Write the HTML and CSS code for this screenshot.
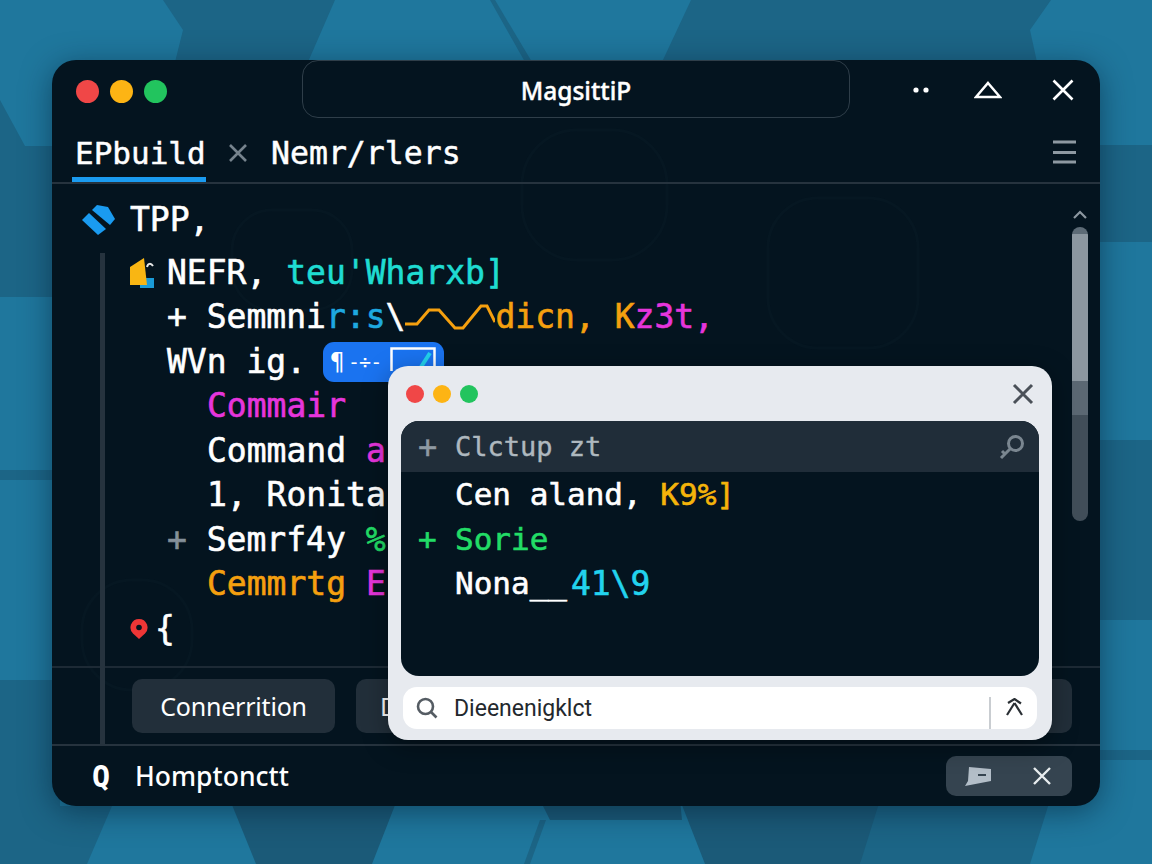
FILE: index.html
```html
<!DOCTYPE html>
<html lang="en">
<head>
<meta charset="utf-8">
<title>MagsittiP</title>
<link rel="stylesheet" href="styles.css">
</head>
<body>
<svg class="backdrop" viewBox="0 0 1152 864" aria-hidden="true">
  <rect class="bg-base" width="1152" height="864"/>
  <polygon class="bg-dark" points="163,0 335,0 308,62 175,62 183,30"/>
  <polygon class="bg-dark" points="691,0 1051,0 1030,30 1037,62 662,62"/>
  <polygon class="bg-dark" points="490,0 495,0 532,62 525,62"/>
  <polygon class="bg-dark" points="0,100 25,146 52,146 52,297 0,297"/>
  <polygon class="bg-dark" points="0,470 52,470 52,480 0,480"/>
  <polygon class="bg-dark" points="0,680 60,680 60,806 112,806 87,864 0,864"/>
  <polygon class="bg-deep" points="230,800 397,800 372,864 256,864"/>
  <polygon class="bg-deep" points="540,800 680,800 682,820 550,820"/>
  <polygon class="bg-deep" points="680,800 880,800 882,820 860,864 705,864"/>
  <polygon class="bg-dark" points="880,800 1050,800 1030,864 860,864"/>
  <polygon class="bg-dark" points="540,820 546,820 530,864 524,864"/>
  <polygon class="bg-dark" points="1090,145 1152,145 1152,242 1090,242"/>
  <polygon class="bg-dark" points="1090,440 1152,440 1152,620 1090,620"/>
  <polygon class="bg-dark" points="1090,750 1152,750 1152,760 1090,760"/>
</svg>
<main class="window">
  <svg class="faces" viewBox="0 0 1048 746" aria-hidden="true">
    <rect x="470" y="70" width="145" height="130" rx="55"/>
    <rect x="716" y="138" width="150" height="150" rx="50"/>
    <rect x="735" y="410" width="130" height="120" rx="50"/>
    <rect x="30" y="520" width="110" height="110" rx="50"/>
    <rect x="180" y="150" width="120" height="100" rx="40"/>
  </svg>
  <header class="titlebar">
    <div class="lights">
      <span class="light red"></span><span class="light amber"></span><span class="light green"></span>
    </div>
    <div class="title-pill">MagsittiP</div>
    <div class="win-actions">
      <svg class="i-dots" viewBox="0 0 16 6"><circle cx="3" cy="3" r="2.6"/><circle cx="13" cy="3" r="2.6"/></svg>
      <svg class="i-tri" viewBox="0 0 28 18"><path d="M14 2 L26 16 H2 Z"/></svg>
      <svg class="i-close" viewBox="0 0 22 22"><path d="M1.5 1.5 L20.5 20.5 M20.5 1.5 L1.5 20.5"/></svg>
    </div>
  </header>
  <nav class="tabs">
    <div class="tab active">EPbuild</div>
    <svg class="tab-x" viewBox="0 0 20 20"><path d="M2 2 L18 18 M18 2 L2 18"/></svg>
    <div class="tab">Nemr/rlers</div>
    <svg class="hamburger" viewBox="0 0 24 24"><path d="M1 2 H24 M1 12.5 H24 M1 22 H24"/></svg>
  </nav>
  <section class="editor">
    <div class="code">
      <div class="row root">
        <svg class="i-diamond" viewBox="0 0 33 30"><path d="M10 5 L15 0 L26 2 L33 14 L28 20 Z"/><path d="M0 15 L7 8 L24 24 L16 30 Z"/></svg>
        <span class="txt">TPP,</span>
      </div>
      <div class="row lvl0">
        <svg class="i-folder" viewBox="0 0 25 30"><path class="f-arc" d="M17 9 C18 5 21 5 23 8"/><rect class="f-blue" x="10" y="20" width="14" height="10"/><path class="f-gold" d="M0 9 L14 0 L17 27 L0 27 Z"/></svg>
        <span class="txt">NEFR, <span class="c-cyan">teu'Wharxb]</span></span>
      </div>
      <div class="row lvl1">
        <span class="txt">+ Semmni<span class="c-sky">r:s</span>\</span>
        <svg class="i-wave" viewBox="0 0 90 34"><path d="M0 24 L12 24 L24 10 L34 10 L50 28 L58 28 L76 6 L82 6 L90 22"/></svg>
        <span class="txt c-orange">dicn, K<span class="c-pink">z3t,</span></span>
      </div>
      <div class="row lvl1">
        <span class="txt">WVn ig.</span>
        <span class="badge">
          <span class="badge-mark">¶</span>
          <span class="badge-dash">-÷-</span>
          <svg class="i-box" viewBox="0 0 46 24"><rect x="1.5" y="1.5" width="43" height="30"/><path d="M31 20 L40 6" /></svg>
        </span>
      </div>
      <div class="row lvl2"><span class="txt c-pink">Commair</span></div>
      <div class="row lvl2"><span class="txt">Command <span class="c-pink">a</span></span></div>
      <div class="row lvl2"><span class="txt">1, Ronita</span></div>
      <div class="row lvl1"><span class="txt"><span class="c-grey">+</span> Semrf4y <span class="c-green">%</span></span></div>
      <div class="row lvl2"><span class="txt c-orange">Cemmrtg <span class="c-pink">E</span></span></div>
      <div class="row lvl0">
        <svg class="i-pin" viewBox="0 0 18 20"><path class="pin-body" d="M9 0 A8.5 8.5 0 0 1 15 14.5 L9 20 L3 14.5 A8.5 8.5 0 0 1 9 0 Z"/><circle class="pin-hole" cx="9" cy="8.5" r="2.8"/></svg>
        <span class="txt">{</span>
      </div>
    </div>
    <div class="scroll">
      <svg class="i-chev" viewBox="0 0 16 10"><path d="M2 8 L8 2 L14 8"/></svg>
      <div class="track"></div>
    </div>
  </section>
  <section class="actions">
    <button class="btn btn-first">Connerrition</button>
    <button class="btn btn-second">D</button>
  </section>
  <footer class="status">
    <span class="status-q">Q</span>
    <span class="status-text">Homptonctt</span>
    <div class="status-pill">
      <svg class="i-flag" viewBox="0 0 26 20"><path d="M4 1 L26 3 L26 15 L0 20 L3 15 Z"/><path class="flag-mark" d="M13 9 H21"/></svg>
      <svg class="i-x-small" viewBox="0 0 20 20"><path d="M2 2 L18 18 M18 2 L2 18"/></svg>
    </div>
  </footer>
  <div class="guide"></div>
  <aside class="modal">
    <div class="modal-head">
      <span class="mlight red"></span><span class="mlight amber"></span><span class="mlight green"></span>
      <svg class="i-mclose" viewBox="0 0 22 22"><path d="M2 2 L20 20 M20 2 L2 20"/></svg>
    </div>
    <div class="panel">
      <div class="panel-head">
        <span class="plus">+</span><span>Clctup zt</span>
        <svg class="i-key" viewBox="0 0 26 26"><circle cx="16.5" cy="9.5" r="7"/><path d="M11.5 14.5 L2 24 M6 20 L3 17"/></svg>
      </div>
      <div class="panel-row"><span class="plus"></span>Cen aland,<span class="c-yellow"> K9%]</span></div>
      <div class="panel-row c-green"><span class="plus">+</span>Sorie</div>
      <div class="panel-row"><span class="plus"></span>Nona__<span class="c-cyan2">41\9</span></div>
    </div>
    <div class="searchbar">
      <svg class="i-search" viewBox="0 0 22 22"><circle cx="9.5" cy="9.5" r="7.5"/><path d="M15 15 L20.5 20.5"/></svg>
      <span class="search-text">Dieenenigklct</span>
      <span class="search-div"></span>
      <svg class="i-tool" viewBox="0 0 20 20"><path d="M3 5 L9.5 1 L16 5.5 M9.5 5 L2 17 M9.5 5 L17 17"/></svg>
    </div>
  </aside>
</main>
</body>
</html>
```
FILE: styles.css
```css
* { box-sizing: border-box; }
html, body { margin: 0; height: 864px; overflow: hidden; }
body {
  position: relative;
  padding: 60px 52px 58px;
  font-family: "DejaVu Sans Mono", monospace;
  color: #fff;
}
.backdrop { position: absolute; left: 0; top: 0; width: 1152px; height: 864px; }
.bg-base { fill: #1f779d; }
.bg-dark { fill: #1c6586; }
.bg-deep { fill: #1b5a78; }

.window {
  position: relative;
  width: 1048px;
  height: 746px;
  display: flex;
  flex-direction: column;
  background: #04141f;
  border-radius: 24px;
  overflow: hidden;
  box-shadow: 0 6px 30px rgba(0, 25, 45, .5);
}
.faces { position: absolute; left: 0; top: 0; width: 1048px; height: 746px; }
.faces rect { fill: none; stroke: #061722; stroke-width: 3; }

/* title bar */
.titlebar { position: relative; flex: 0 0 58px; display: flex; align-items: center; }
.lights { display: flex; gap: 11px; margin: 4px 0 0 24px; }
.light { width: 23px; height: 23px; border-radius: 50%; }
.red { background: #f04747; }
.amber { background: #fdb414; }
.green { background: #22c45e; }
.title-pill {
  width: 548px;
  height: 58px;
  margin-left: 135px;
  display: flex;
  align-items: center;
  justify-content: center;
  padding-top: 2px;
  border: 1.5px solid #2f3e49;
  border-radius: 16px;
  font: 500 24.5px "Noto Sans", sans-serif;
  -webkit-text-stroke: .4px currentColor;
}
.win-actions { display: flex; align-items: center; margin: 2px 0 0 63px; }
.i-dots { width: 16px; height: 6px; fill: #fff; margin-right: 45px; }
.i-tri { width: 28px; height: 18px; fill: none; stroke: #fff; stroke-width: 2.5; margin-right: 50px; }
.i-close { width: 22px; height: 22px; stroke: #fff; stroke-width: 2.6; fill: none; }

/* tabs */
.tabs {
  position: relative;
  flex: 0 0 66px;
  display: flex;
  align-items: flex-start;
  border-bottom: 2px solid #26333e;
}
.tab {
  padding: 14px 0 0 3px;
  font-size: 31px;
  line-height: 42px;
  white-space: nowrap;
  -webkit-text-stroke: .5px currentColor;
}
.tab.active {
  width: 134px;
  height: 64px;
  margin-left: 20px;
  border-bottom: 5px solid #1a9bf0;
}
.tab-x { width: 20px; height: 20px; margin: 25px 0 0 22px; fill: none; stroke: #76838d; stroke-width: 2.6; }
.tab-x + .tab { margin-left: 23px; padding-left: 0; font-size: 31.5px; }
.hamburger { width: 24px; height: 24px; margin: 22px 0 0 591px; fill: none; stroke: #8e99a2; stroke-width: 3; }

/* editor */
.editor { position: relative; flex: 1; display: flex; min-height: 0; }
.code { flex: 1; padding-top: 14px; }
.row {
  height: 44.5px;
  display: flex;
  align-items: center;
  font-size: 33px;
  white-space: pre;
  -webkit-text-stroke: .6px currentColor;
}
.row.root { margin-bottom: 8px; padding-left: 30px; }
.row.lvl0 { padding-left: 78px; }
.row.lvl1 { padding-left: 115px; }
.row.lvl2 { padding-left: 155px; }
.txt { line-height: 44px; }
.c-cyan { color: #1fdcd2; }
.c-sky { color: #1ea9e0; }
.c-orange { color: #f5a00f; }
.c-pink { color: #e635dc; }
.c-grey { color: #84909a; }
.c-green { color: #22dc66; }
.c-yellow { color: #f5b40a; }
.c-cyan2 { color: #22d3ee; font-size: 33px; margin-left: 4px; }
.i-diamond { width: 33px; height: 30px; margin-right: 15px; fill: #1a9bf0; }
.i-folder { width: 25px; height: 30px; margin-right: 12px; }
.f-gold { fill: #f9b613; }
.f-blue { fill: #1a9bd8; }
.f-arc { fill: none; stroke: #e8e8e8; stroke-width: 2; }
.i-wave { width: 90px; height: 34px; fill: none; stroke: #f5a00f; stroke-width: 3; }
.badge {
  display: inline-flex;
  align-items: center;
  width: 121px;
  height: 40px;
  margin-left: 17px;
  padding-left: 7px;
  background: #1a73f0;
  border-radius: 11px;
  overflow: hidden;
  -webkit-text-stroke: 0;
}
.badge-mark { font-size: 24px; width: 18px; }
.badge-dash { font-size: 20px; width: 42px; letter-spacing: -1px; }
.i-box { width: 46px; height: 24px; margin-top: -6px; fill: none; stroke: #fff; stroke-width: 2.5; }
.i-box path { stroke: #22d3ee; stroke-width: 4; }
.i-pin { width: 18px; height: 20px; margin-right: 7px; }
.pin-body { fill: #ee3636; }
.pin-hole { fill: #04141f; }

.scroll { flex: 0 0 16px; margin-right: 12px; padding-top: 26px; }
.i-chev { display: block; width: 16px; height: 10px; margin-bottom: 7px; fill: none; stroke: #8c97a0; stroke-width: 2.2; }
.track {
  height: 294px;
  border-radius: 8px;
  background: linear-gradient(#5d6b76 0 7px, #8c97a0 7px 154px, #5b6873 154px 188px, #414e59 188px);
}

/* actions */
.actions {
  position: relative;
  flex: 0 0 80px;
  display: flex;
  align-items: center;
  gap: 21px;
  padding: 0 28px 0 80px;
  border-top: 2px solid #1d2a35;
  border-bottom: 2px solid #26333e;
}
.btn {
  height: 54px;
  border: 0;
  border-radius: 10px;
  background: #222f3a;
  color: #fff;
  font: 25px "Noto Sans", sans-serif;
}
.btn-first { width: 203px; padding: 0; letter-spacing: -.2px; }
.btn-second { flex: 1; text-align: left; padding-left: 24px; }

/* status bar */
.status { position: relative; flex: 0 0 60px; display: flex; align-items: center; padding: 0 28px 0 40px; }
.status-q { width: 43px; font-size: 30px; font-weight: 700; }
.status-text { flex: 1; font: 500 26.5px "Noto Sans", sans-serif; }
.status-pill {
  display: flex;
  align-items: center;
  width: 126px;
  height: 40px;
  padding-left: 19px;
  background: #354450;
  border-radius: 10px;
}
.i-flag { width: 26px; height: 20px; margin-right: 41px; fill: #b3bec8; }
.flag-mark { stroke: #354450; stroke-width: 2; }
.i-x-small { width: 20px; height: 20px; fill: none; stroke: #e8ecef; stroke-width: 2.4; }

.guide { position: absolute; left: 48px; top: 193px; width: 5px; height: 493px; background: #26333e; }

/* modal */
.modal {
  position: absolute;
  left: 336px;
  top: 306px;
  width: 664px;
  height: 374px;
  display: flex;
  flex-direction: column;
  background: #e7eaef;
  border-radius: 20px;
  box-shadow: 0 6px 26px rgba(0, 0, 0, .35);
}
.modal-head { flex: 0 0 55px; display: flex; align-items: center; gap: 9px; padding: 0 18px; }
.mlight { width: 18px; height: 18px; border-radius: 50%; }
.i-mclose { width: 22px; height: 22px; margin-left: auto; fill: none; stroke: #4a5058; stroke-width: 3; }
.panel {
  flex: 0 0 255px;
  margin: 0 13px;
  background: #04141f;
  border-radius: 18px;
  overflow: hidden;
}
.panel-head {
  height: 51px;
  display: flex;
  align-items: center;
  padding: 0 14px 0 17px;
  background: #202d39;
  color: #aeb8bf;
  font-size: 27px;
  white-space: pre;
  -webkit-text-stroke: .4px currentColor;
}
.plus { display: inline-block; width: 37px; }
.panel-head .plus { font-size: 32px; color: #8f9aa3; }
.i-key { width: 26px; height: 26px; margin-left: auto; fill: none; stroke: #7a8690; stroke-width: 3; }
.panel-row {
  height: 44.5px;
  display: flex;
  align-items: center;
  padding-left: 17px;
  font-size: 31px;
  white-space: pre;
  -webkit-text-stroke: .6px currentColor;
}
.searchbar {
  height: 42px;
  margin: 11px 15px 0;
  display: flex;
  align-items: center;
  padding-left: 13px;
  background: #fff;
  border-radius: 14px;
  color: #23282d;
}
.i-search { width: 22px; height: 22px; fill: none; stroke: #555c63; stroke-width: 2.6; margin-right: 16px; }
.search-text { flex: 1; font: 23px Roboto, sans-serif; }
.search-div { align-self: flex-end; width: 2px; height: 32px; margin-right: 14px; background: #c9cdd1; }
.i-tool { width: 20px; height: 20px; margin-right: 12px; fill: none; stroke: #2a2f34; stroke-width: 2.2; }
```
